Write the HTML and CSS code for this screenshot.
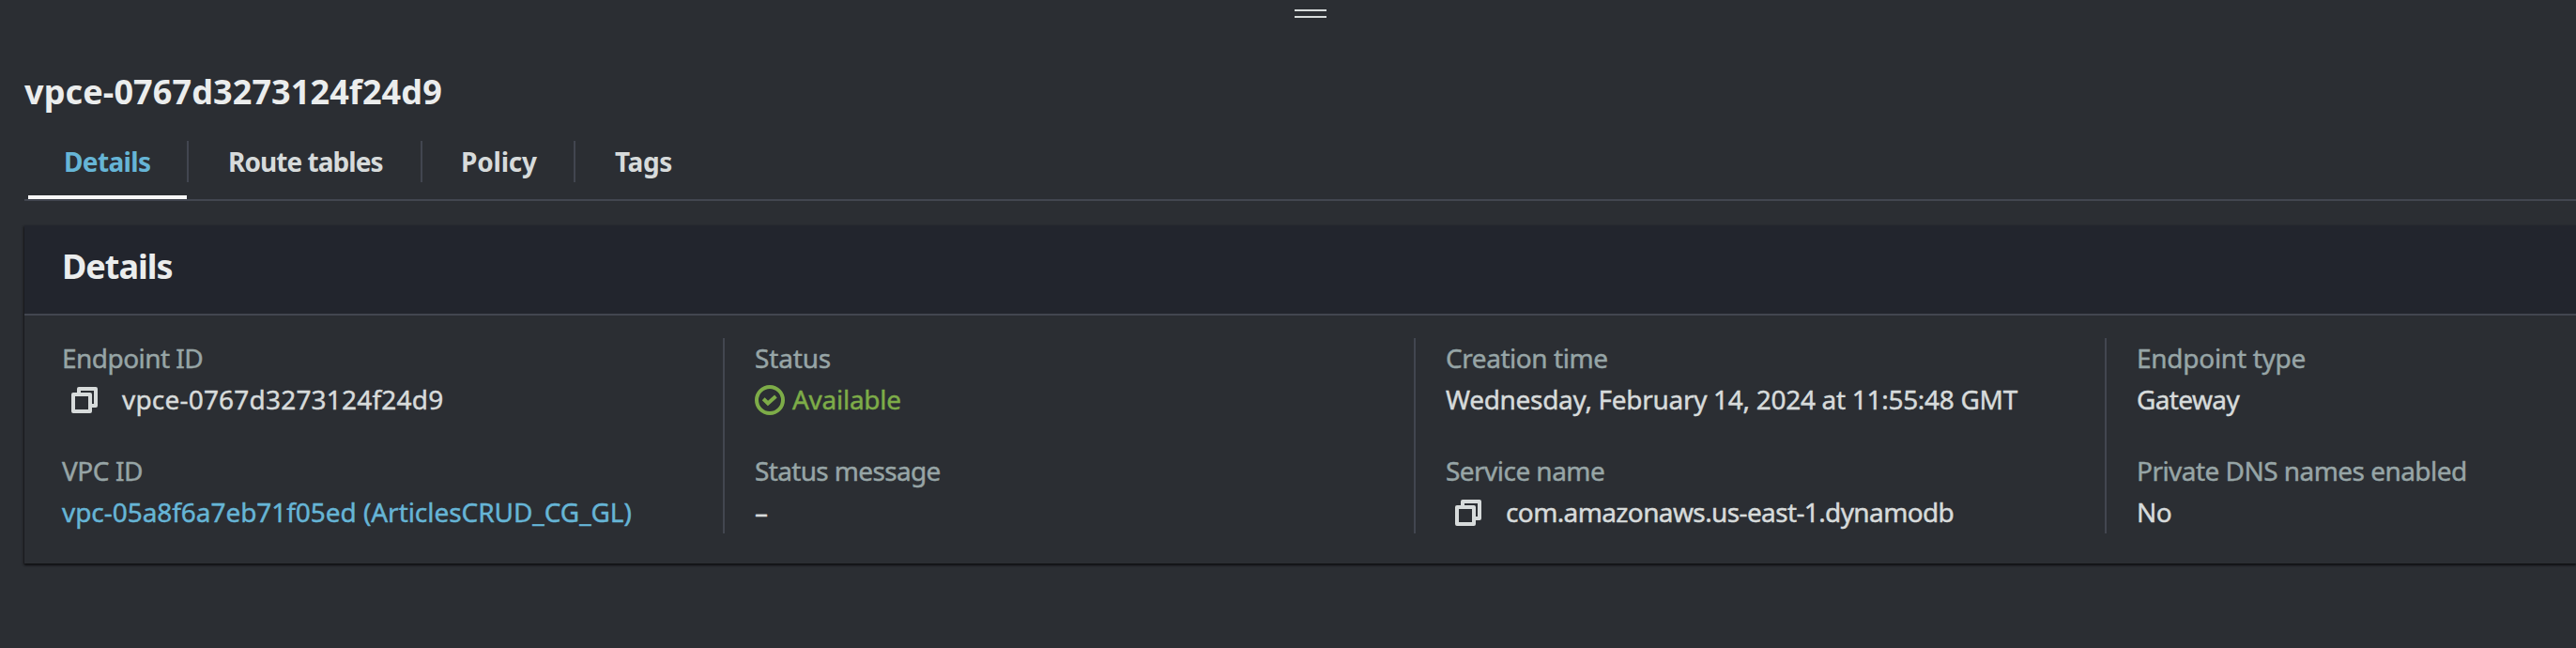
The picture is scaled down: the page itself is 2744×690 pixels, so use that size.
FILE: index.html
```html
<!DOCTYPE html>
<html lang="en">
<head>
<meta charset="utf-8">
<title>vpce-0767d3273124f24d9</title>
<link rel="stylesheet" href="styles.css">
</head>
<body>
<div class="split-handle"><i></i><i></i></div>
<main class="panel">
  <h1 class="title">vpce-0767d3273124f24d9</h1>
  <nav class="tabs">
    <a class="tab tab-details active">Details</a>
    <a class="tab tab-routes">Route tables</a>
    <a class="tab tab-policy">Policy</a>
    <a class="tab tab-tags">Tags</a>
  </nav>
  <section class="card">
    <header class="card-header"><h2>Details</h2></header>
    <div class="columns">
      <div class="column">
        <dl>
          <dt class="ls-55">Endpoint ID</dt>
          <dd class="wide copyable"><svg class="copy" viewBox="0 0 28 28"><path d="M8 6V2H26V20H22"/><path d="M2 8H20V26H2Z"/></svg><span>vpce-0767d3273124f24d9</span></dd>
        </dl>
        <dl>
          <dt class="ls-40">VPC ID</dt>
          <dd class="link ls-05">vpc-05a8f6a7eb71f05ed (ArticlesCRUD_CG_GL)</dd>
        </dl>
      </div>
      <div class="column">
        <dl>
          <dt class="ls-15">Status</dt>
          <dd class="status ls-27"><svg class="check" viewBox="0 0 32 32"><circle cx="16" cy="16" r="14"/><path d="M9.2 14.8L14 19.5L22.4 12"/></svg><span>Available</span></dd>
        </dl>
        <dl>
          <dt class="ls-65">Status message</dt>
          <dd>–</dd>
        </dl>
      </div>
      <div class="column">
        <dl>
          <dt class="ls-40">Creation time</dt>
          <dd class="ls-30">Wednesday, February 14, 2024 at 11:55:48 GMT</dd>
        </dl>
        <dl>
          <dt class="ls-55">Service name</dt>
          <dd class="ls-60 copyable"><svg class="copy" viewBox="0 0 28 28"><path d="M8 6V2H26V20H22"/><path d="M2 8H20V26H2Z"/></svg><span>com.amazonaws.us-east-1.dynamodb</span></dd>
        </dl>
      </div>
      <div class="column">
        <dl>
          <dt class="ls-27">Endpoint type</dt>
          <dd class="ls-60">Gateway</dd>
        </dl>
        <dl>
          <dt class="ls-55">Private DNS names enabled</dt>
          <dd class="ls-65">No</dd>
        </dl>
      </div>
    </div>
  </section>
</main>
</body>
</html>
```

FILE: styles.css
```css
* { box-sizing: border-box; }
body {
  margin: 0;
  height: 690px;
  overflow: hidden;
  background: #2b2e33;
  color: #d7dbdb;
  font: 28px/44px "Noto Sans", "Open Sans", sans-serif;
  white-space: nowrap;
}
h1, h2, dl, dt, dd { margin: 0; }

.split-handle {
  display: flex;
  flex-direction: column;
  gap: 5px;
  width: 34px;
  height: 73px;
  margin-left: 1379px;
  padding-top: 10px;
}
.split-handle i { height: 2px; background: #d7dbdb; }

.panel { padding-left: 26px; }
.title {
  font-size: 36px;
  line-height: 50px;
  font-weight: 700;
  letter-spacing: 0.1px;
  color: #ebeded;
}

.tabs {
  display: flex;
  height: 91px;
  padding: 27px 0 0 4px;
  border-bottom: 2px solid #424650;
}
.tab {
  position: relative;
  height: 62px;
  line-height: 44px;
  font-weight: 700;
}
.tab + .tab::before {
  content: "";
  position: absolute;
  left: 0;
  top: 0;
  width: 2px;
  height: 44px;
  background: #424650;
}
.tab-details { width: 169px; padding-left: 38px; letter-spacing: -0.65px; }
.tab-routes { width: 249px; padding-left: 44px; letter-spacing: -0.95px; }
.tab-policy { width: 163px; padding-left: 43px; letter-spacing: -0.2px; }
.tab-tags { padding-left: 44px; letter-spacing: -0.4px; }
.tab.active { color: #66b5d6; border-bottom: 4px solid #f8f8f8; }

.card {
  margin-top: 26px;
  height: 360px;
  box-shadow: 0 2px 2px 0 #111214, -1px 1px 2px 0 #1c1d20;
  background: #2b2e33;
}
.card-header {
  height: 96px;
  padding: 19px 40px 0;
  background: #22252d;
  border-bottom: 2px solid #424650;
}
.card-header h2 {
  font-size: 36px;
  line-height: 50px;
  font-weight: 700;
  letter-spacing: -1px;
  color: #ebeded;
}

.columns {
  display: grid;
  grid-template-columns: 744px 736px 736px 1fr;
  padding-top: 24px;
}
.column {
  display: grid;
  gap: 32px;
  height: 208px;
  padding-left: 32px;
  border-left: 2px solid #424650;
  -webkit-text-stroke: 0.45px currentColor;
}
.column:first-child { padding-left: 40px; border-left: 0; }
dt { line-height: 42px; color: #97a5a6; }
dd { height: 46px; line-height: 46px; }
.copyable { display: flex; padding: 10px 0 0 10px; line-height: 26px; }
.copy { width: 28px; height: 28px; margin-right: 26px; fill: none; stroke: #d7dbdb; stroke-width: 4; stroke-linejoin: round; }
.status { display: flex; color: #7dac48; }
.check { width: 32px; height: 32px; margin: 8px 8px 0 0; fill: none; stroke: #7dac48; stroke-width: 4; }
.link { color: #66b5d6; }

.wide { letter-spacing: 0.2px; }
.ls-05 { letter-spacing: -0.05px; }
.ls-15 { letter-spacing: -0.15px; }
.ls-27 { letter-spacing: -0.27px; }
.ls-30 { letter-spacing: -0.3px; }
.ls-40 { letter-spacing: -0.45px; }
.ls-55 { letter-spacing: -0.54px; }
.ls-60 { letter-spacing: -0.62px; }
.ls-65 { letter-spacing: -0.65px; }
```
